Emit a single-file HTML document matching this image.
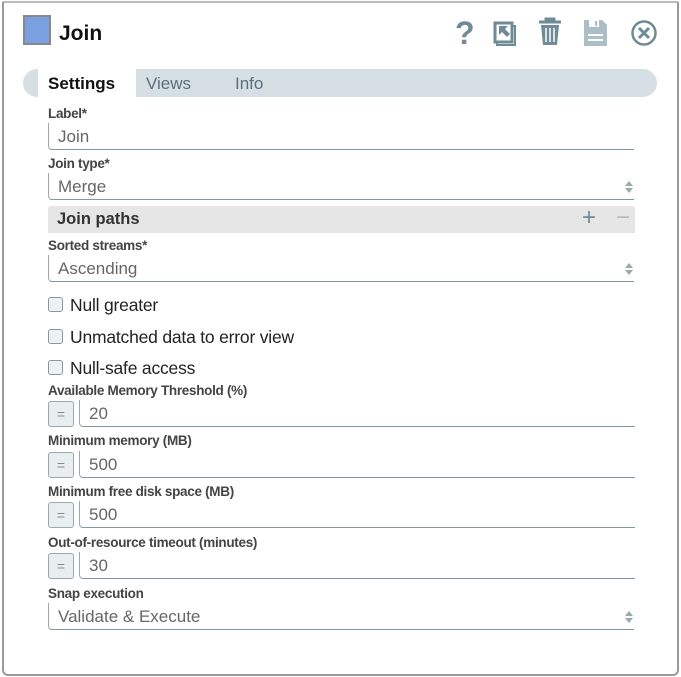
<!DOCTYPE html>
<html><head><style>
body{margin:0;width:681px;height:677px;background:#fff;font-family:"Liberation Sans",sans-serif;position:relative;overflow:hidden}
.frame{position:absolute;left:2px;top:1px;width:673px;height:671px;border:2px solid #9a9a9a;border-top-color:#bbb;border-radius:2px 2px 6px 6px}
.a{position:absolute}
.lbl{position:absolute;left:48px;font-size:13.5px;font-weight:bold;color:#444;letter-spacing:-0.3px}
.fld{position:absolute;left:48px;width:586px;height:27px;border-left:1px solid #9aa8b0;border-bottom:1px solid #7f98a4;border-radius:0 0 0 4px;font-size:17px;color:#666;line-height:27px;padding-left:9px;box-sizing:border-box}
.fld.e{left:79px;width:556px}
.eq{position:absolute;left:48px;width:26px;height:26px;background:#e9eff1;border:1px solid #9aa8b0;border-radius:3px;box-sizing:border-box;color:#888;font-size:14px;text-align:center;line-height:24px}
.arr{position:absolute;right:0;top:7px;width:10px;height:14px}
.cb{position:absolute;left:48px;width:15px;height:15px;border:1px solid #8a979e;border-radius:3px;background:#eef2f4;box-sizing:border-box}
.ct{position:absolute;left:70px;font-size:17.5px;color:#222;letter-spacing:-0.2px}
</style></head><body>
<div class="frame"></div>
<div class="a" style="left:23px;top:15px;width:28px;height:30px;background:#7aa0e2;border:2px solid #888;box-sizing:border-box"></div>
<div class="a" style="left:59px;top:22px;font-size:21px;font-weight:bold;color:#111">Join</div>
<svg class="a" style="left:450px;top:14px" width="220" height="36" viewBox="0 0 220 36">
<text x="5" y="30" font-family="Liberation Sans" font-weight="bold" font-size="32" fill="#6f8b96">?</text>
<rect x="45" y="9" width="17" height="19" fill="none" stroke="#6f8b96" stroke-width="3"/>
<path d="M62 12h3v19h-18v-3" fill="none" stroke="#6f8b96" stroke-width="2"/>
<path d="M49 12h9l-3 3 5 5-3 3-5-5-3 3z" fill="#6f8b96"/>
<path d="M89 8h22M96 8v-3h8v3" stroke="#6f8b96" stroke-width="3" fill="none"/>
<path d="M91 11h18l-2 20h-14z" fill="#6f8b96"/>
<path d="M96 14v14M100 14v14M104 14v14" stroke="#fff" stroke-width="1.5"/>
<path d="M134 6h18l5 5v21h-23z" fill="#a9bec6"/>
<rect x="139" y="6" width="10" height="7" fill="#fff"/><rect x="145" y="7" width="2" height="5" fill="#a9bec6"/>
<path d="M138 21h15M138 26h15" stroke="#fff" stroke-width="2"/>
<circle cx="194" cy="19" r="11.5" fill="none" stroke="#6f8b96" stroke-width="2.5"/>
<path d="M189 14l10 10M199 14l-10 10" stroke="#6f8b96" stroke-width="3"/>
</svg>
<div class="a" style="left:23px;top:69px;width:634px;height:28px;background:#d6dfe3;border-radius:14px"></div>
<div class="a" style="left:38px;top:69px;width:98px;height:28px;background:#fff"></div>
<div class="a" style="left:48px;top:74px;font-size:17px;font-weight:bold;color:#111">Settings</div>
<div class="a" style="left:146px;top:74px;font-size:17px;color:#5a717c">Views</div>
<div class="a" style="left:235px;top:74px;font-size:17px;color:#5a717c">Info</div>

<div class="lbl" style="top:106px">Label*</div>
<div class="fld" style="top:123px">Join</div>
<div class="lbl" style="top:156px">Join type*</div>
<div class="fld" style="top:173px">Merge<svg class="arr" viewBox="0 0 10 14"><path d="M5 1l4 5H1zM5 13l4-5H1z" fill="#9aa"/></svg></div>
<div class="a" style="left:48px;top:206px;width:587px;height:27px;background:#e6e6e6;border-radius:3px 3px 0 0"></div>
<div class="a" style="left:57px;top:210px;font-size:16.5px;font-weight:bold;color:#333">Join paths</div>
<div class="a" style="left:582px;top:204px;font-size:24px;color:#6f8b96">+</div>
<div class="a" style="left:616px;top:204px;font-size:24px;color:#bbb">−</div>
<div class="lbl" style="top:238px">Sorted streams*</div>
<div class="fld" style="top:255px">Ascending<svg class="arr" viewBox="0 0 10 14"><path d="M5 1l4 5H1zM5 13l4-5H1z" fill="#9aa"/></svg></div>

<div class="cb" style="top:297px"></div><div class="ct" style="top:295px">Null greater</div>
<div class="cb" style="top:329px"></div><div class="ct" style="top:327px">Unmatched data to error view</div>
<div class="cb" style="top:360px"></div><div class="ct" style="top:358px">Null-safe access</div>

<div class="lbl" style="top:383px">Available Memory Threshold (%)</div>
<div class="eq" style="top:401px">=</div><div class="fld e" style="top:400px">20</div>
<div class="lbl" style="top:433px">Minimum memory (MB)</div>
<div class="eq" style="top:452px">=</div><div class="fld e" style="top:451px">500</div>
<div class="lbl" style="top:484px">Minimum free disk space (MB)</div>
<div class="eq" style="top:502px">=</div><div class="fld e" style="top:501px">500</div>
<div class="lbl" style="top:535px">Out-of-resource timeout (minutes)</div>
<div class="eq" style="top:553px">=</div><div class="fld e" style="top:552px">30</div>
<div class="lbl" style="top:586px">Snap execution</div>
<div class="fld" style="top:603px">Validate &amp; Execute<svg class="arr" viewBox="0 0 10 14"><path d="M5 1l4 5H1zM5 13l4-5H1z" fill="#9aa"/></svg></div>
</body></html>
